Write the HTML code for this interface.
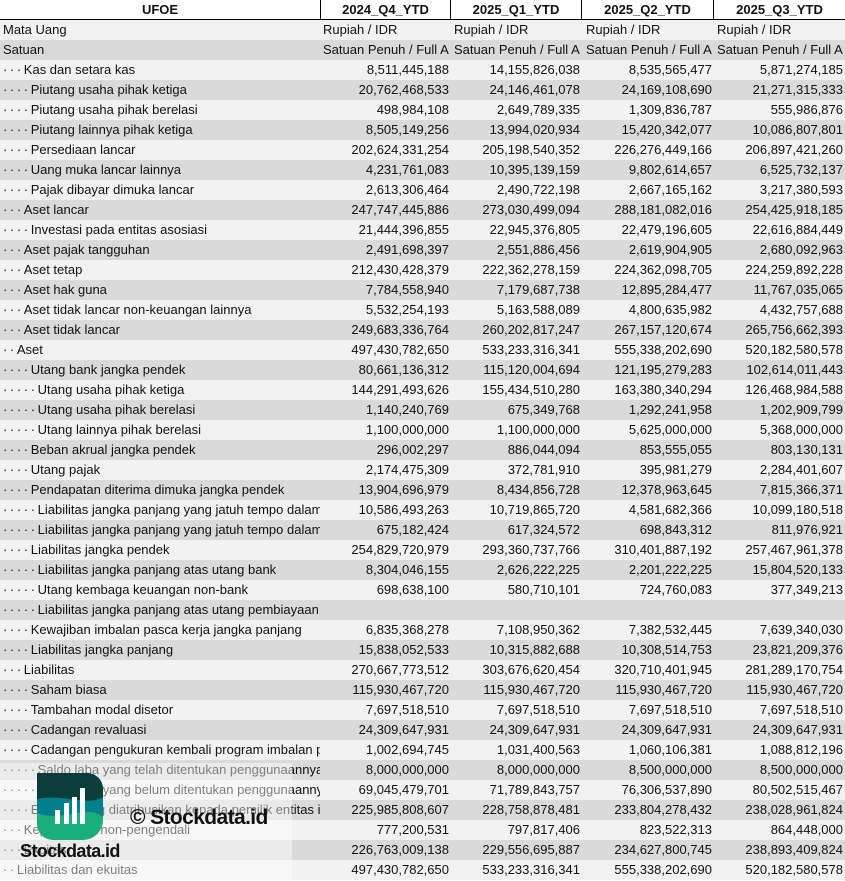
<!DOCTYPE html>
<html><head><meta charset="utf-8">
<style>
body{margin:0;width:845px;height:881px;overflow:hidden;background:#fff;font-family:"Liberation Sans",sans-serif;font-size:13px;color:#111;position:relative}
.r{position:absolute;left:0;width:845px;height:20px;line-height:20px}
.r.l{background:#f2f2f2}.r.d{background:#dadada}
.c{position:absolute;top:0;height:20px;overflow:hidden;white-space:nowrap}
.c0{left:3px;width:317px}
.c1{left:320px;width:129px}.c2{left:451px;width:129px}.c3{left:583px;width:129px}.c4{left:714px;width:129px}
.n .c1,.n .c2,.n .c3,.n .c4{text-align:right}
.t .c1,.t .c2,.t .c3,.t .c4{padding-left:3px;width:126px}
.h{position:absolute;top:0;left:0;width:845px;height:19px;background:#fff;border-bottom:1px solid #000;font-weight:bold;line-height:19px;z-index:2}
.h div{position:absolute;top:0;height:19px;text-align:center;border-right:1px solid #000}
.ov{position:absolute;left:0;top:763px;width:292px;height:118px;background:rgba(255,255,255,0.45)}
</style></head><body>
<div class="h"><div style="left:0;width:320px">UFOE</div><div style="left:321px;width:129px">2024_Q4_YTD</div><div style="left:451px;width:130px">2025_Q1_YTD</div><div style="left:582px;width:131px">2025_Q2_YTD</div><div style="left:714px;width:131px;border-right:none">2025_Q3_YTD</div></div>
<div id="rows"></div>
<script>
var D=[
["Mata Uang","Rupiah / IDR","Rupiah / IDR","Rupiah / IDR","Rupiah / IDR",0,1],
["Satuan","Satuan Penuh / Full Amount","Satuan Penuh / Full Amount","Satuan Penuh / Full Amount","Satuan Penuh / Full Amount",0,1],
["Kas dan setara kas","8,511,445,188","14,155,826,038","8,535,565,477","5,871,274,185",3],
["Piutang usaha pihak ketiga","20,762,468,533","24,146,461,078","24,169,108,690","21,271,315,333",4],
["Piutang usaha pihak berelasi","498,984,108","2,649,789,335","1,309,836,787","555,986,876",4],
["Piutang lainnya pihak ketiga","8,505,149,256","13,994,020,934","15,420,342,077","10,086,807,801",4],
["Persediaan lancar","202,624,331,254","205,198,540,352","226,276,449,166","206,897,421,260",4],
["Uang muka lancar lainnya","4,231,761,083","10,395,139,159","9,802,614,657","6,525,732,137",4],
["Pajak dibayar dimuka lancar","2,613,306,464","2,490,722,198","2,667,165,162","3,217,380,593",4],
["Aset lancar","247,747,445,886","273,030,499,094","288,181,082,016","254,425,918,185",3],
["Investasi pada entitas asosiasi","21,444,396,855","22,945,376,805","22,479,196,605","22,616,884,449",4],
["Aset pajak tangguhan","2,491,698,397","2,551,886,456","2,619,904,905","2,680,092,963",3],
["Aset tetap","212,430,428,379","222,362,278,159","224,362,098,705","224,259,892,228",3],
["Aset hak guna","7,784,558,940","7,179,687,738","12,895,284,477","11,767,035,065",3],
["Aset tidak lancar non-keuangan lainnya","5,532,254,193","5,163,588,089","4,800,635,982","4,432,757,688",3],
["Aset tidak lancar","249,683,336,764","260,202,817,247","267,157,120,674","265,756,662,393",3],
["Aset","497,430,782,650","533,233,316,341","555,338,202,690","520,182,580,578",2],
["Utang bank jangka pendek","80,661,136,312","115,120,004,694","121,195,279,283","102,614,011,443",4],
["Utang usaha pihak ketiga","144,291,493,626","155,434,510,280","163,380,340,294","126,468,984,588",5],
["Utang usaha pihak berelasi","1,140,240,769","675,349,768","1,292,241,958","1,202,909,799",5],
["Utang lainnya pihak berelasi","1,100,000,000","1,100,000,000","5,625,000,000","5,368,000,000",5],
["Beban akrual jangka pendek","296,002,297","886,044,094","853,555,055","803,130,131",4],
["Utang pajak","2,174,475,309","372,781,910","395,981,279","2,284,401,607",4],
["Pendapatan diterima dimuka jangka pendek","13,904,696,979","8,434,856,728","12,378,963,645","7,815,366,371",4],
["Liabilitas jangka panjang yang jatuh tempo dalam satu tahun","10,586,493,263","10,719,865,720","4,581,682,366","10,099,180,518",5],
["Liabilitas jangka panjang yang jatuh tempo dalam satu tahun","675,182,424","617,324,572","698,843,312","811,976,921",5],
["Liabilitas jangka pendek","254,829,720,979","293,360,737,766","310,401,887,192","257,467,961,378",4],
["Liabilitas jangka panjang atas utang bank","8,304,046,155","2,626,222,225","2,201,222,225","15,804,520,133",5],
["Utang kembaga keuangan non-bank","698,638,100","580,710,101","724,760,083","377,349,213",5],
["Liabilitas jangka panjang atas utang pembiayaan konsumen","","","","",5],
["Kewajiban imbalan pasca kerja jangka panjang","6,835,368,278","7,108,950,362","7,382,532,445","7,639,340,030",4],
["Liabilitas jangka panjang","15,838,052,533","10,315,882,688","10,308,514,753","23,821,209,376",4],
["Liabilitas","270,667,773,512","303,676,620,454","320,710,401,945","281,289,170,754",3],
["Saham biasa","115,930,467,720","115,930,467,720","115,930,467,720","115,930,467,720",4],
["Tambahan modal disetor","7,697,518,510","7,697,518,510","7,697,518,510","7,697,518,510",4],
["Cadangan revaluasi","24,309,647,931","24,309,647,931","24,309,647,931","24,309,647,931",4],
["Cadangan pengukuran kembali program imbalan pasti","1,002,694,745","1,031,400,563","1,060,106,381","1,088,812,196",4],
["Saldo laba yang telah ditentukan penggunaannya","8,000,000,000","8,000,000,000","8,500,000,000","8,500,000,000",5],
["Saldo laba yang belum ditentukan penggunaannya","69,045,479,701","71,789,843,757","76,306,537,890","80,502,515,467",5],
["Ekuitas yang diatribusikan kepada pemilik entitas induk","225,985,808,607","228,758,878,481","233,804,278,432","238,028,961,824",4],
["Kepentingan non-pengendali","777,200,531","797,817,406","823,522,313","864,448,000",3],
["Ekuitas","226,763,009,138","229,556,695,887","234,627,800,745","238,893,409,824",3],
["Liabilitas dan ekuitas","497,430,782,650","533,233,316,341","555,338,202,690","520,182,580,578",2]];
var h="";
D.forEach(function(r,i){var dots="";for(var k=0;k<(r[5]||0);k++)dots+="·\u2009";
h+='<div class="r '+(i%2?'d':'l')+' '+(r[6]?'t':'n')+'" style="top:'+(20+i*20)+'px"><div class="c c0">'+dots+r[0]+'</div><div class="c c1">'+r[1]+'</div><div class="c c2">'+r[2]+'</div><div class="c c3">'+r[3]+'</div><div class="c c4">'+r[4]+'</div></div>';});
document.getElementById("rows").innerHTML=h;
</script>
<div class="ov"></div>
<svg style="position:absolute;left:37px;top:773px" width="66" height="67" viewBox="0 0 66 67">
<defs><clipPath id="cp"><path d="M0 0H50A16 16 0 0 1 66 16V47A20 20 0 0 1 46 67H16A16 16 0 0 1 0 51Z"/></clipPath></defs>
<g clip-path="url(#cp)">
<rect width="66" height="67" fill="#1aae7c"/>
<path d="M0 0H66V44C50 30 25 50 0 40Z" fill="#007f8f"/>
<path d="M0 0H66V24C50 34 25 20 0 26Z" fill="#0b3d3a"/>
</g>
<g fill="#fff"><rect x="18" y="37" width="5" height="14"/><rect x="27" y="30" width="5" height="21"/><rect x="35" y="24" width="5" height="27"/><rect x="43" y="15" width="5" height="36"/></g>
</svg>
<div style="position:absolute;left:130px;top:806px;font-weight:bold;font-size:21px;color:#111;letter-spacing:-0.6px">© Stockdata.id</div>
<div style="position:absolute;left:20px;top:841px;font-weight:bold;font-size:18px;color:#111;letter-spacing:-0.6px">Stockdata.id</div>
</body></html>
